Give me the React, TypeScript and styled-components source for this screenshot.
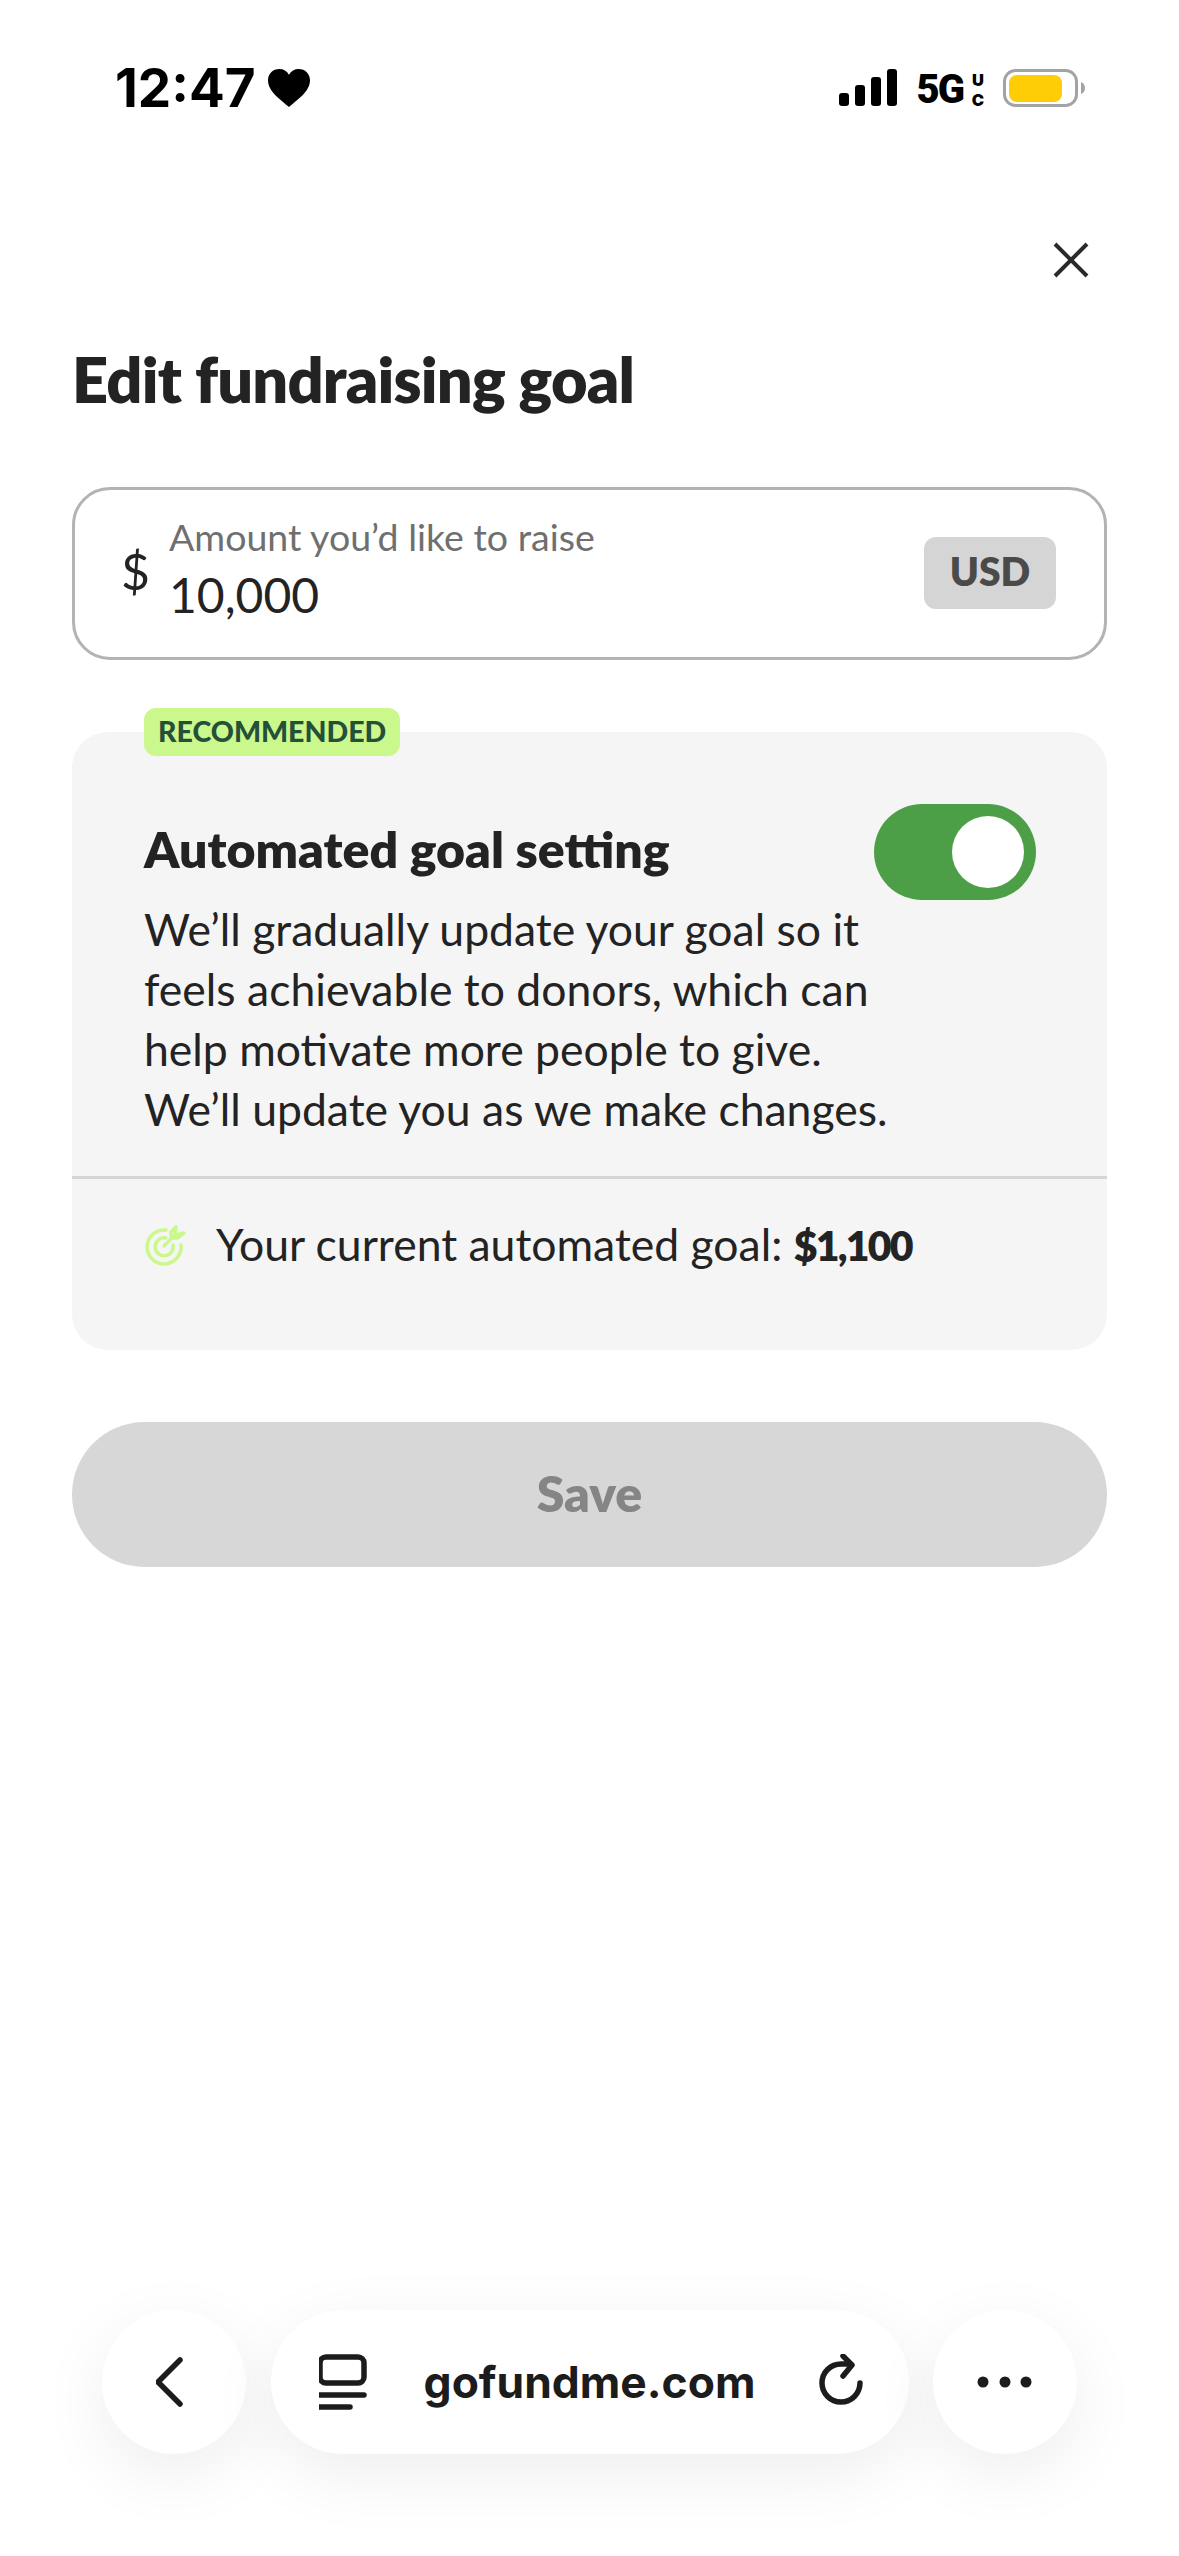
import React from "react";
import styled, { createGlobalStyle } from "styled-components";

const Global = createGlobalStyle`
  html, body { margin: 0; padding: 0; background: #fff; }
  * { box-sizing: border-box; }
`;

const Page = styled.div`
  width: 1179px;
  height: 2556px;
  display: flex;
  flex-direction: column;
  overflow: hidden;
  background: #fff;
  font-family: Lato, "Noto Sans", sans-serif;
  color: #232323;
`;

const StatusBar = styled.div`
  height: 176px;
  padding: 60px 0 0 115px;
  display: flex;
  align-items: flex-start;
`;

const Time = styled.div`
  font-family: Inter, sans-serif;
  font-weight: 700;
  font-size: 53px;
  line-height: 56px;
  color: #000;
`;

const HeartIcon = styled.svg`
  width: 42px;
  height: 40px;
  margin: 8px 0 0 12px;
`;

const StatusRight = styled.div`
  margin-left: auto;
  padding: 9px 92px 0 0;
  display: flex;
  align-items: flex-start;
`;

const FiveG = styled.div`
  font-family: Roboto, sans-serif;
  font-weight: 900;
  font-size: 40px;
  line-height: 42px;
  letter-spacing: -2px;
  color: #000;
  margin-left: 20px;
`;

const UC = styled.div`
  font-family: Inter, sans-serif;
  font-weight: 900;
  font-size: 16.5px;
  line-height: 20px;
  color: #000;
  width: 16px;
  margin: 1px 0 0 7px;
  text-align: center;
`;

const BatteryIcon = styled.svg`
  width: 84px;
  height: 40px;
  margin-left: 17px;
`;

const CloseRow = styled.div`
  display: flex;
  justify-content: flex-end;
  padding-right: 90px;
  height: 167px;
  padding-top: 66px;
`;

const Heading = styled.h1`
  margin: 0;
  padding: 0 72px;
  font-size: 63px;
  line-height: 72px;
  font-weight: 800;
  letter-spacing: -0.8px;
  color: #232323;
`;

const Field = styled.div`
  margin: 72px 72px 0;
  height: 173px;
  border: 3px solid #b3b3b3;
  border-radius: 38px;
  display: flex;
  align-items: center;
  padding: 0 48px 0 46px;
`;

const Currency = styled.div`
  font-size: 50px;
  line-height: 60px;
  width: 48px;
  margin-top: -6px;
`;

const FieldText = styled.div`
  display: flex;
  flex-direction: column;
  flex: 1;
`;

const FieldLabel = styled.div`
  font-size: 37.5px;
  line-height: 44px;
  color: #6f6f6f;
  margin-top: -8px;
`;

const FieldValue = styled.div`
  font-size: 48px;
  line-height: 60px;
  margin-top: 6px;
`;

const Unit = styled.div`
  width: 132px;
  height: 72px;
  margin-top: -2px;
  border-radius: 12px;
  background: #d5d5d5;
  color: #4a4a4a;
  font-weight: 800;
  font-size: 39px;
  padding-bottom: 3px;
  display: flex;
  align-items: center;
  justify-content: center;
`;

const Card = styled.div`
  position: relative;
  margin: 72px 72px 0;
  height: 618px;
  background: #f5f5f5;
  border-radius: 36px;
  display: flex;
  flex-direction: column;
`;

const Badge = styled.div`
  position: absolute;
  top: -24px;
  left: 72px;
  height: 48px;
  padding: 0 14px 2px;
  border-radius: 12px;
  background: #cbf88c;
  color: #24503a;
  font-size: 28.5px;
  font-weight: 900;
  display: flex;
  align-items: center;
`;

const CardTop = styled.div`
  height: 447px;
  padding: 72px 72px 0;
  border-bottom: 3px solid #d5d5d5;
  display: flex;
  justify-content: space-between;
  align-items: flex-start;
`;

const CardTitle = styled.div`
  font-size: 50px;
  line-height: 60px;
  font-weight: 800;
  margin-top: 15px;
`;

const CardBody = styled.div`
  font-size: 44.5px;
  line-height: 60px;
  margin-top: 20px;
  width: 760px;
`;

const Toggle = styled.div`
  width: 162px;
  height: 96px;
  flex: none;
  border-radius: 48px;
  background: #4c9f47;
  display: flex;
  justify-content: flex-end;
  align-items: center;
  padding-right: 12px;
  margin-left: -30px;
`;

const Knob = styled.div`
  width: 72px;
  height: 72px;
  border-radius: 50%;
  background: #fff;
`;

const CardFoot = styled.div`
  display: flex;
  align-items: center;
  padding: 35px 72px 0;
  font-size: 44.5px;
  line-height: 60px;
  gap: 30px;
`;

const Strong = styled.b`
  font-weight: 800;
  font-size: 41px;
  letter-spacing: -1.8px;
`;

const SaveButton = styled.div`
  margin: 72px 72px 0;
  height: 145px;
  border-radius: 73px;
  background: #d7d7d7;
  color: #858585;
  font-size: 50px;
  font-weight: 800;
  padding-bottom: 4px;
  display: flex;
  align-items: center;
  justify-content: center;
`;

const BottomBar = styled.div`
  margin-top: auto;
  padding: 0 102px 102px;
  display: flex;
  justify-content: space-between;
`;

const RoundButton = styled.div`
  width: 144px;
  height: 144px;
  border-radius: 50%;
  background: #fff;
  box-shadow: 0 20px 70px rgba(0, 0, 0, 0.07);
  display: flex;
  align-items: center;
  justify-content: center;
`;

const UrlPill = styled.div`
  width: 638px;
  height: 144px;
  border-radius: 72px;
  background: #fff;
  box-shadow: 0 20px 70px rgba(0, 0, 0, 0.07);
  display: flex;
  align-items: center;
  justify-content: space-between;
  padding: 0 42px 0 48px;
`;

const Url = styled.div`
  font-family: Inter, sans-serif;
  font-weight: 700;
  font-size: 44.4px;
  color: #1c1c1c;
  margin-right: 8px;
`;

export default function App() {
  return (
    <Page>
      <Global />
      <StatusBar>
        <Time>12:47</Time>
        <HeartIcon viewBox="0 0 44 40">
          <path d="M22 40C14 33 0 24 0 12C0 5 5 0 12 0C16 0 20 2 22 6C24 2 28 0 32 0C39 0 44 5 44 12C44 24 30 33 22 40Z" fill="#000" />
        </HeartIcon>
        <StatusRight>
          <svg width="58" height="38" viewBox="0 0 58 38">
            <rect x="0" y="24" width="10" height="13" rx="3" fill="#000" />
            <rect x="16" y="16" width="10" height="21" rx="3" fill="#000" />
            <rect x="32" y="8" width="10" height="29" rx="3" fill="#000" />
            <rect x="48" y="0" width="10" height="37" rx="3" fill="#000" />
          </svg>
          <FiveG>5G</FiveG>
          <UC>U<br />C</UC>
          <BatteryIcon viewBox="0 0 84 40">
            <rect x="1.5" y="1.5" width="72" height="35" rx="11" fill="#fff" stroke="#a3a3a3" strokeWidth="3" />
            <rect x="6" y="6" width="53" height="27" rx="8" fill="#ffcd05" />
            <path d="M78 13C81 14 82 17 82 19C82 21 81 24 78 25Z" fill="#a3a3a3" />
          </BatteryIcon>
        </StatusRight>
      </StatusBar>
      <CloseRow>
        <svg width="36" height="36" viewBox="0 0 36 36">
          <path d="M2 2L34 34M34 2L2 34" stroke="#2a2a2a" strokeWidth="4" fill="none" />
        </svg>
      </CloseRow>
      <Heading>Edit fundraising goal</Heading>
      <Field>
        <Currency>$</Currency>
        <FieldText>
          <FieldLabel>Amount you’d like to raise</FieldLabel>
          <FieldValue>10,000</FieldValue>
        </FieldText>
        <Unit>USD</Unit>
      </Field>
      <Card>
        <Badge>RECOMMENDED</Badge>
        <CardTop>
          <div>
            <CardTitle>Automated goal setting</CardTitle>
            <CardBody>
              We’ll gradually update your goal so it feels achievable to donors, which can help motivate more people to give. We’ll update you as we make changes.
            </CardBody>
          </div>
          <Toggle><Knob /></Toggle>
        </CardTop>
        <CardFoot>
          <svg width="42" height="42" viewBox="0 0 42 42" fill="none" stroke="#cbf88c" strokeWidth="3.5" strokeLinecap="round" strokeLinejoin="round">
            <path d="M22 6A17 17 0 1 0 37 21" />
            <path d="M22 14A9 9 0 1 0 29 21" />
            <path d="M20 22L31 11" />
            <path d="M31 11L32 3L27 8L27 14L34 14L40 9Z" />
          </svg>
          <span>Your current automated goal: <Strong>$1,100</Strong></span>
        </CardFoot>
      </Card>
      <SaveButton>Save</SaveButton>
      <BottomBar>
        <RoundButton>
          <svg width="36" height="56" viewBox="0 0 36 56" fill="none" stroke="#1c1c1c" strokeWidth="5.5" strokeLinecap="round" strokeLinejoin="round">
            <path d="M24 6L2 28L24 50" />
          </svg>
        </RoundButton>
        <UrlPill>
          <svg width="50" height="56" viewBox="0 0 50 56" fill="none" stroke="#1c1c1c" strokeWidth="5.5" strokeLinecap="round">
            <rect x="1" y="3" width="44" height="26" rx="6" />
            <path d="M1 41H45M1 53H31" />
          </svg>
          <Url>gofundme.com</Url>
          <svg width="48" height="56" viewBox="0 0 48 56" fill="none" stroke="#1c1c1c" strokeWidth="5.5" strokeLinecap="round" strokeLinejoin="round">
            <path d="M42 29A19 19 0 1 1 23 10L32 10" />
            <path d="M25 2L34 11L25 22" />
          </svg>
        </UrlPill>
        <RoundButton>
          <svg width="56" height="14" viewBox="0 0 56 14" fill="#1c1c1c">
            <circle cx="6" cy="7" r="5.5" />
            <circle cx="28" cy="7" r="5.5" />
            <circle cx="49" cy="7" r="5.5" />
          </svg>
        </RoundButton>
      </BottomBar>
    </Page>
  );
}
